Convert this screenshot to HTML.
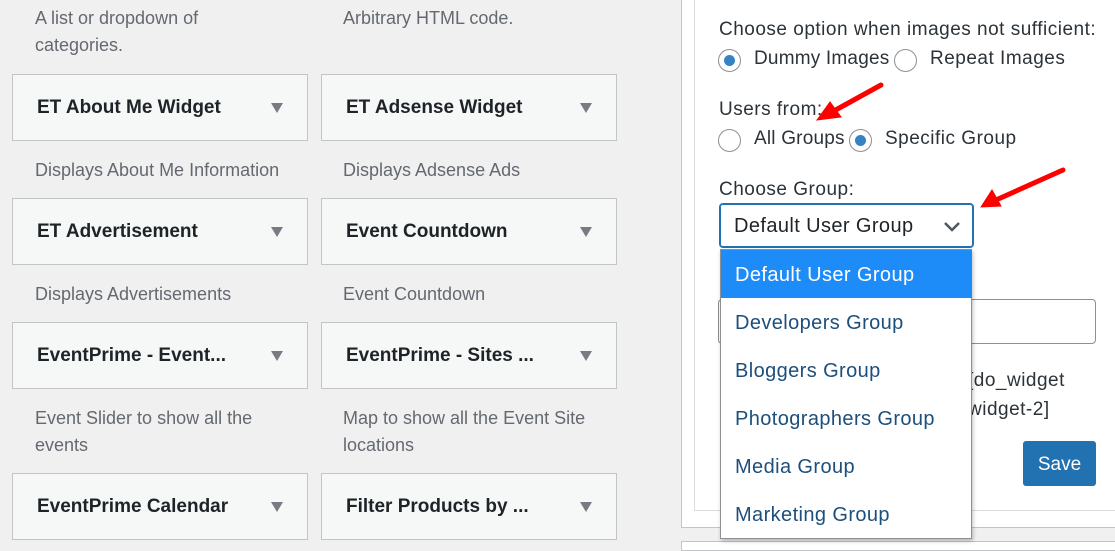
<!DOCTYPE html>
<html><head><meta charset="utf-8"><style>
*{margin:0;padding:0;box-sizing:border-box}
body{width:1115px;height:545px;overflow:hidden;background:#f0f0f1;font-family:"Liberation Sans",sans-serif;position:relative}
.a{position:absolute;white-space:nowrap}
.box{position:absolute;width:296px;height:67px;background:#f6f7f7;border:1px solid #c3c4c7}
.box b{position:absolute;left:24px;top:22px;font-size:19px;color:#1d2327;white-space:nowrap}
.box i{position:absolute;right:24px;top:28px;width:0;height:0;border-left:6px solid transparent;border-right:6px solid transparent;border-top:10px solid #787c82}
.d{position:absolute;font-size:18px;color:#646970;line-height:27px}
.r{position:absolute;font-size:19px;letter-spacing:0.5px;color:#2c3338;white-space:nowrap}
.s{letter-spacing:0.2px}
.rad{position:absolute;width:23px;height:23px;border:1px solid #8c8f94;border-radius:50%;background:#fff}
.rad.on::after{content:"";position:absolute;left:5px;top:5px;width:11px;height:11px;border-radius:50%;background:#3582c4}
.it{position:absolute;left:14px;font-size:20px;letter-spacing:0.4px;color:#1d4f7c;white-space:nowrap}
</style></head><body>
<div class="d" style="left:35px;top:5px">A list or dropdown of<br>categories.</div>
<div class="d" style="left:343px;top:5px">Arbitrary HTML code.</div>

<div class="box" style="left:12px;top:74px"><b>ET About Me Widget</b><i></i></div>
<div class="box" style="left:321px;top:74px"><b>ET Adsense Widget</b><i></i></div>
<div class="d" style="left:35px;top:157px">Displays About Me Information</div>
<div class="d" style="left:343px;top:157px">Displays Adsense Ads</div>

<div class="box" style="left:12px;top:198px"><b>ET Advertisement</b><i></i></div>
<div class="box" style="left:321px;top:198px"><b>Event Countdown</b><i></i></div>
<div class="d" style="left:35px;top:281px">Displays Advertisements</div>
<div class="d" style="left:343px;top:281px">Event Countdown</div>

<div class="box" style="left:12px;top:322px"><b>EventPrime - Event...</b><i></i></div>
<div class="box" style="left:321px;top:322px"><b>EventPrime - Sites ...</b><i></i></div>
<div class="d" style="left:35px;top:405px">Event Slider to show all the<br>events</div>
<div class="d" style="left:343px;top:405px">Map to show all the Event Site<br>locations</div>

<div class="box" style="left:12px;top:473px"><b>EventPrime Calendar</b><i></i></div>
<div class="box" style="left:321px;top:473px"><b>Filter Products by ...</b><i></i></div>

<div style="position:absolute;left:681px;top:-2px;width:440px;height:530px;background:#fff;border:1px solid #c3c4c7"></div>
<div style="position:absolute;left:694px;top:-2px;width:430px;height:513px;background:#fff;border:1px solid #dcdcde"></div>
<div style="position:absolute;left:681px;top:541px;width:440px;height:10px;background:#fff;border:1px solid #c3c4c7"></div>

<div class="r" style="left:719px;top:19px">Choose option when images not sufficient:</div>
<div class="rad on" style="left:718px;top:49px"></div>
<div class="r s" style="left:754px;top:48px">Dummy Images</div>
<div class="rad" style="left:894px;top:49px"></div>
<div class="r" style="left:930px;top:48px">Repeat Images</div>
<div class="r" style="left:719px;top:99px">Users from:</div>
<div class="rad" style="left:718px;top:129px"></div>
<div class="r s" style="left:754px;top:128px">All Groups</div>
<div class="rad on" style="left:849px;top:129px"></div>
<div class="r" style="left:885px;top:128px">Specific Group</div>
<div class="r" style="left:719px;top:179px">Choose Group:</div>

<div style="position:absolute;left:718px;top:299px;width:378px;height:45px;border:1px solid #8c8f94;border-radius:4px;background:#fff"></div>
<div class="r" style="left:968px;top:366px;line-height:29px">[do_widget<br>widget-2]</div>
<div style="position:absolute;left:1023px;top:441px;width:73px;height:45px;background:#2271b1;border-radius:3px;color:#fff;font-size:19px;text-align:center;line-height:47px">Save</div>

<div style="position:absolute;left:719px;top:203px;width:255px;height:45px;border:1px solid #2271b1;border-radius:4px;background:#fff;box-shadow:0 0 0 1px #2271b1 inset"></div>
<div class="r" style="left:734px;top:215px;font-size:20px;letter-spacing:0.4px;color:#1d2327">Default User Group</div>
<svg class="a" style="left:942px;top:219px" width="20" height="14"><path d="M3 4 L10 11 L17 4" fill="none" stroke="#50575e" stroke-width="2.5"/></svg>

<div style="position:absolute;left:720px;top:249px;width:252px;height:290px;background:#fff;border:1px solid #8c8f94;box-shadow:1px 2px 4px rgba(0,0,0,.25)">
<div style="position:absolute;left:0;top:0;width:251px;height:48px;background:#1e8cf8"></div>
<div class="it" style="top:14px;color:#fff">Default User Group</div>
<div class="it" style="top:62px">Developers Group</div>
<div class="it" style="top:110px">Bloggers Group</div>
<div class="it" style="top:158px">Photographers Group</div>
<div class="it" style="top:206px">Media Group</div>
<div class="it" style="top:254px">Marketing Group</div>
</div>

<svg class="a" style="left:0;top:0" width="1115" height="545">
<g stroke="#f00" stroke-width="5" stroke-linecap="round" fill="#f00">
<line x1="881" y1="85" x2="832" y2="112"/>
<polygon points="817,120 830,102 841,117" stroke-width="1"/>
<line x1="1063" y1="170" x2="996" y2="200"/>
<polygon points="981,207 992,190 1001,206" stroke-width="1"/>
</g></svg>
</body></html>
